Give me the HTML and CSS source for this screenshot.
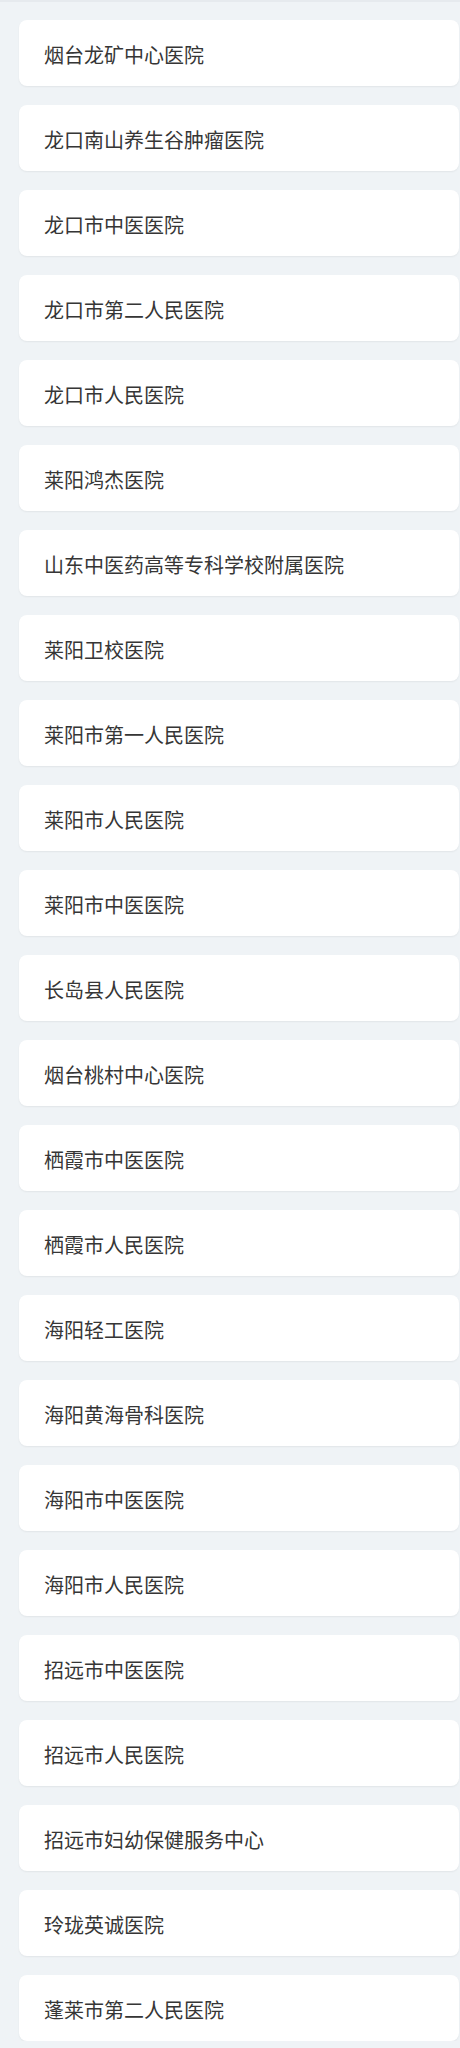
FILE: index.html
```html
<!DOCTYPE html>
<html lang="zh-CN">
<head>
<meta charset="utf-8">
<title>医院列表</title>
<link rel="stylesheet" href="styles.css">
</head>
<body>
<div class="topline"></div>
<ul class="list">
  <li class="card">烟台龙矿中心医院</li>
  <li class="card">龙口南山养生谷肿瘤医院</li>
  <li class="card">龙口市中医医院</li>
  <li class="card">龙口市第二人民医院</li>
  <li class="card">龙口市人民医院</li>
  <li class="card">莱阳鸿杰医院</li>
  <li class="card">山东中医药高等专科学校附属医院</li>
  <li class="card">莱阳卫校医院</li>
  <li class="card">莱阳市第一人民医院</li>
  <li class="card">莱阳市人民医院</li>
  <li class="card">莱阳市中医医院</li>
  <li class="card">长岛县人民医院</li>
  <li class="card">烟台桃村中心医院</li>
  <li class="card">栖霞市中医医院</li>
  <li class="card">栖霞市人民医院</li>
  <li class="card">海阳轻工医院</li>
  <li class="card">海阳黄海骨科医院</li>
  <li class="card">海阳市中医医院</li>
  <li class="card">海阳市人民医院</li>
  <li class="card">招远市中医医院</li>
  <li class="card">招远市人民医院</li>
  <li class="card">招远市妇幼保健服务中心</li>
  <li class="card">玲珑英诚医院</li>
  <li class="card">蓬莱市第二人民医院</li>
</ul>
</body>
</html>
```

FILE: styles.css
```css
html, body {
  margin: 0;
  padding: 0;
  background: #eff3f6;
}
body {
  font-family: "Noto Sans CJK SC", "Noto Sans", sans-serif;
  color: #363636;
}
.topline {
  height: 2px;
  background: #e6eaee;
}
.list {
  list-style: none;
  margin: 0;
  padding: 18px 1px 0 19px;
  display: flex;
  flex-direction: column;
  gap: 19px;
}
.card {
  height: 66px;
  box-sizing: border-box;
  background: #fff;
  border-radius: 8px;
  box-shadow: 0 1px 2px rgba(0, 0, 0, 0.06);
  padding-left: 25px;
  display: flex;
  align-items: center;
  font-size: 20px;
  font-weight: 400;
  line-height: 1;
  padding-top: 3px;
}
```
